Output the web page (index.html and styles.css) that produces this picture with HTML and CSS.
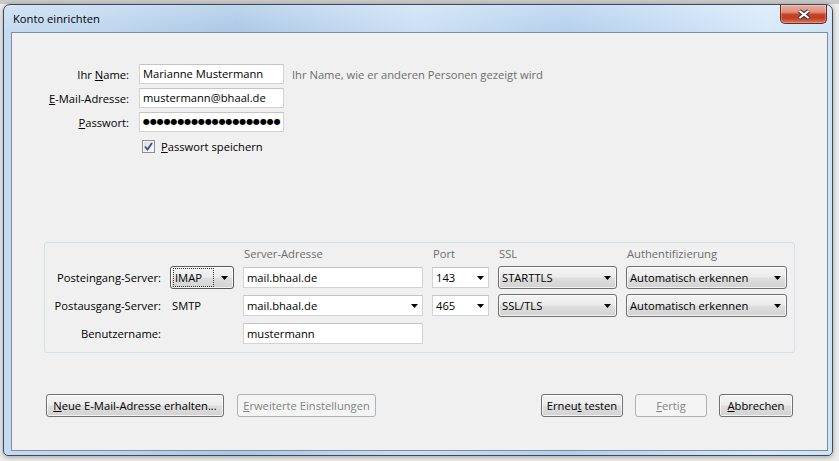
FILE: index.html
```html
<!DOCTYPE html>
<html lang="de">
<head>
<meta charset="utf-8">
<title>Konto einrichten</title>
<link rel="stylesheet" href="styles.css">
</head>
<body>
<div class="window">
  <div class="titlebar">
    <span class="title">Konto einrichten</span>
    <div class="close" aria-label="Schließen">
      <svg width="14" height="11" viewBox="0 0 14 11">
        <path d="M2.5 2 L11.5 9 M11.5 2 L2.5 9" stroke="#3a3a3a" stroke-width="4.2" fill="none"/>
        <path d="M2.5 2 L11.5 9 M11.5 2 L2.5 9" stroke="#ffffff" stroke-width="2.2" fill="none"/>
      </svg>
    </div>
  </div>
  <div class="content">
    <div class="account">
      <span class="lbl">Ihr <u>N</u>ame:</span>
      <div class="field">
        <span class="input w-name">Marianne Mustermann</span>
        <span class="hint">Ihr Name, wie er anderen Personen gezeigt wird</span>
      </div>
      <span class="lbl"><u>E</u>-Mail-Adresse:</span>
      <div class="field">
        <span class="input w-name">mustermann@bhaal.de</span>
      </div>
      <span class="lbl"><u>P</u>asswort:</span>
      <div class="field">
        <span class="input w-name pw">●●●●●●●●●●●●●●●●●●●●</span>
      </div>
      <div class="check-row">
        <span class="checkbox">
          <svg width="9" height="9" viewBox="0 0 9 9"><path d="M1 4.5 L3.5 7.5 L8 1" stroke="#3a4f8c" stroke-width="1.8" fill="none"/></svg>
        </span>
        <span><u>P</u>asswort speichern</span>
      </div>
    </div>

    <div class="group">
      <span></span>
      <span></span>
      <span class="colhead">Server-Adresse</span>
      <span class="colhead">Port</span>
      <span class="colhead">SSL</span>
      <span class="colhead">Authentifizierung</span>

      <span class="glbl">Posteingang-Server:</span>
      <div class="select focused"><span class="focusring">IMAP</span><svg class="arrow" width="7" height="4" viewBox="0 0 7 4"><path d="M0 0 H7 L3.5 4 Z"/></svg></div>
      <span class="input tall">mail.bhaal.de</span>
      <div class="combo"><span>143</span><svg class="arrow" width="7" height="4" viewBox="0 0 7 4"><path d="M0 0 H7 L3.5 4 Z"/></svg></div>
      <div class="select"><span>STARTTLS</span><svg class="arrow" width="7" height="4" viewBox="0 0 7 4"><path d="M0 0 H7 L3.5 4 Z"/></svg></div>
      <div class="select"><span>Automatisch erkennen</span><svg class="arrow" width="7" height="4" viewBox="0 0 7 4"><path d="M0 0 H7 L3.5 4 Z"/></svg></div>

      <span class="glbl">Postausgang-Server:</span>
      <span class="smtp">SMTP</span>
      <div class="combo"><span>mail.bhaal.de</span><svg class="arrow" width="7" height="4" viewBox="0 0 7 4"><path d="M0 0 H7 L3.5 4 Z"/></svg></div>
      <div class="combo"><span>465</span><svg class="arrow" width="7" height="4" viewBox="0 0 7 4"><path d="M0 0 H7 L3.5 4 Z"/></svg></div>
      <div class="select"><span>SSL/TLS</span><svg class="arrow" width="7" height="4" viewBox="0 0 7 4"><path d="M0 0 H7 L3.5 4 Z"/></svg></div>
      <div class="select"><span>Automatisch erkennen</span><svg class="arrow" width="7" height="4" viewBox="0 0 7 4"><path d="M0 0 H7 L3.5 4 Z"/></svg></div>

      <span class="glbl">Benutzername:</span>
      <span></span>
      <span class="input tall">mustermann</span>
    </div>

    <div class="buttons">
      <span class="btn w-new"><span><u>N</u>eue E-Mail-Adresse erhalten...</span></span>
      <span class="btn disabled w-adv"><span><u>E</u>rweiterte Einstellungen</span></span>
      <span class="spacer"></span>
      <div class="right-buttons">
        <span class="btn w-retest"><span>Erneu<u>t</u> testen</span></span>
        <span class="btn disabled w-done"><span><u>F</u>ertig</span></span>
        <span class="btn w-cancel"><span><u>A</u>bbrechen</span></span>
      </div>
    </div>
  </div>
</div>
</body>
</html>
```

FILE: styles.css
```css
* { box-sizing: border-box; }

html, body { margin: 0; }

body {
  width: 839px;
  height: 461px;
  overflow: hidden;
  background: linear-gradient(#c9c9c9 0, #c9c9c9 4px, #ececec 4px);
  font-family: "Open Sans", "Noto Sans", sans-serif;
  font-size: 11.2px;
  color: #000;
}

u { text-decoration: underline; text-underline-offset: 1px; }

.window {
  margin: 4px 0 0 3px;
  width: 830px;
  height: 452px;
  border: 1px solid #3e4a57;
  border-radius: 7px 7px 5px 5px;
  background:
    linear-gradient(rgba(255,255,255,0.25), rgba(255,255,255,0) 30px),
    linear-gradient(90deg, #c3daf1 0%, #bdd5ee 12%, #a9c7e6 28%, #bcd4ee 40%, #c9dff4 50%, #b3cfec 68%, #c3dbf3 80%, #d6e8f8 92%, #cde2f5 100%);
  padding: 0 4px 4px 7px;
  display: flex;
  flex-direction: column;
  box-shadow: 0 1px 5px rgba(0,0,0,0.35);
}

.titlebar {
  height: 27px;
  flex: none;
  display: flex;
  align-items: flex-start;
  justify-content: space-between;
}

.title {
  padding: 6px 0 0 2px;
  line-height: 16px;
  color: #000;
}

.close {
  width: 47px;
  height: 19px;
  margin-right: 1px;
  border: 1px solid #6b2a20;
  border-top: none;
  border-radius: 0 0 5px 5px;
  background: linear-gradient(#ebb0a3 0%, #de8b7a 40%, #c8432b 52%, #c23c22 72%, #d7765f 100%);
  box-shadow: inset 0 0 0 1px rgba(255,255,255,0.25);
  display: flex;
  align-items: center;
  justify-content: center;
}

.content {
  flex: 1;
  border: 1px solid #7d8d9e;
  background: #f0f0f0;
  display: flex;
  flex-direction: column;
  padding-top: 31px;
}

.account {
  display: grid;
  grid-template-columns: 117px auto;
  column-gap: 10px;
  row-gap: 4px;
  grid-auto-rows: 20px;
  align-items: center;
}

.lbl { text-align: right; white-space: nowrap; }

.field {
  display: flex;
  align-items: center;
  gap: 8px;
}

.input {
  display: block;
  height: 20px;
  background: #fff;
  border: 1px solid #d3d3d3;
  border-top-color: #c4c4c4;
  padding: 0 3px;
  line-height: 18px;
  white-space: nowrap;
  overflow: hidden;
}

.w-name { width: 145px; }

.pw {
  font-family: "DejaVu Sans", sans-serif;
  font-size: 8px;
  letter-spacing: -0.1px;
  line-height: 18px;
}

.hint { color: #6d6d6d; white-space: nowrap; }

.check-row {
  grid-column: 2;
  display: flex;
  align-items: center;
  gap: 6px;
  padding-left: 3px;
}

.checkbox {
  width: 13px;
  height: 13px;
  border: 1px solid #8e8f8f;
  background: linear-gradient(135deg, #dcdcdc, #fbfbfb);
  box-shadow: inset 0 0 0 1px #f4f4f4;
  display: flex;
  align-items: center;
  justify-content: center;
}

.group {
  margin: 86px 0 0 32px;
  width: 751px;
  height: 111px;
  border: 1px solid #d5dfe5;
  border-radius: 3px;
  padding-top: 3px;
  display: grid;
  grid-template-columns: 116px 64px 180px 57px 119px 161px;
  grid-template-rows: 15px 23px 23px 23px;
  column-gap: 9px;
  row-gap: 5px;
  align-items: center;
}

.colhead {
  color: #6d6d6d;
  padding-left: 1px;
  white-space: nowrap;
}

.glbl { text-align: right; white-space: nowrap; }

.smtp { padding-left: 2px; }

.input.tall { height: 21px; line-height: 19px; }

.select {
  height: 23px;
  border: 1px solid #707070;
  border-radius: 3px;
  background: linear-gradient(#f3f3f3 0%, #ececec 48%, #dedede 52%, #d2d2d2 100%);
  box-shadow: inset 0 0 0 1px rgba(255,255,255,0.7);
  display: flex;
  align-items: center;
  justify-content: space-between;
  padding: 0 5px 0 3px;
  white-space: nowrap;
}

.select.focused { border-color: #5a5a5a; }

.focusring {
  outline: 1px dotted #333;
  outline-offset: 0;
  padding: 0 11px 0 1px;
  line-height: 17px;
}

.combo {
  height: 21px;
  background: #fff;
  border: 1px solid #d3d3d3;
  border-top-color: #c4c4c4;
  display: flex;
  align-items: center;
  justify-content: space-between;
  padding: 0 4px 0 3px;
  white-space: nowrap;
}

.arrow { flex: none; fill: #000; }

.buttons {
  margin-top: 41px;
  padding: 0 34px;
  display: flex;
  align-items: center;
  gap: 13px;
}

.spacer { flex: 1; }

.right-buttons {
  display: flex;
  gap: 12px;
}

.btn {
  display: flex;
  align-items: center;
  justify-content: center;
  height: 23px;
  border: 1px solid #707070;
  border-radius: 3px;
  background: linear-gradient(#f3f3f3 0%, #ececec 48%, #dedede 52%, #d2d2d2 100%);
  box-shadow: inset 0 0 0 1px rgba(255,255,255,0.7);
  white-space: nowrap;
}

.btn.disabled {
  border-color: #adb2b5;
  background: #f4f4f4;
  box-shadow: none;
  color: #838383;
}

.w-new { width: 178px; }
.w-adv { width: 139px; }
.w-retest { width: 82px; }
.w-done { width: 72px; }
.w-cancel { width: 74px; }
```
